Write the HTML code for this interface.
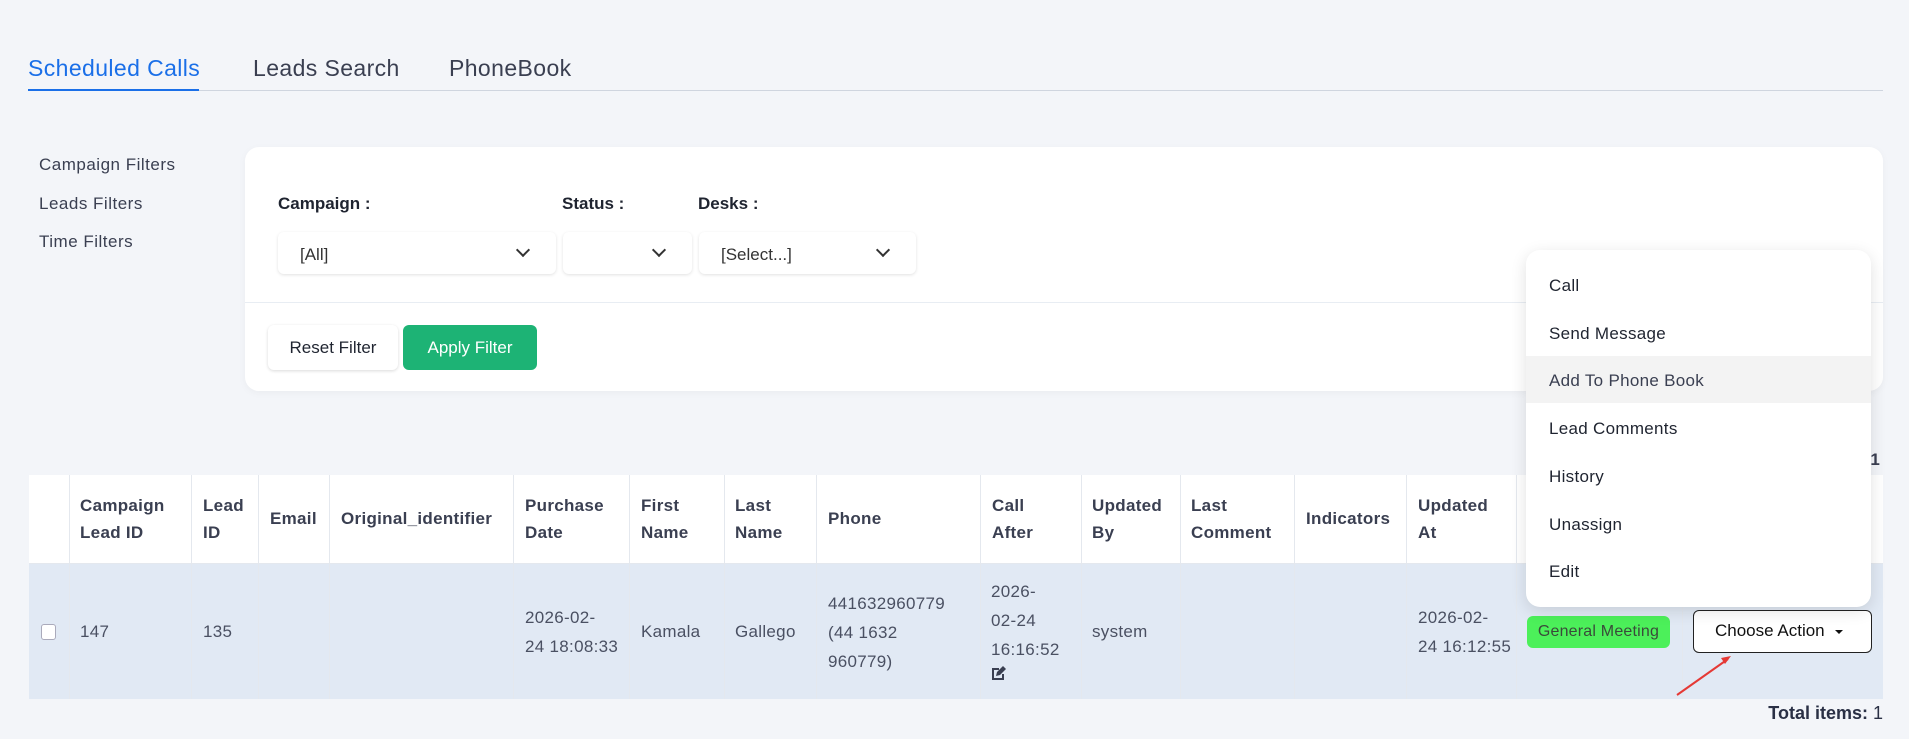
<!DOCTYPE html>
<html><head><meta charset="utf-8"><style>
*{box-sizing:border-box;margin:0;padding:0}
body{width:1909px;height:739px;background:#f3f5f9;font-family:"Liberation Sans",sans-serif;color:#3a3f51;position:relative;overflow:hidden}
.a{position:absolute;white-space:nowrap}
.tab{font-size:23px;top:55px;color:#3a3f51;letter-spacing:0.4px}
.side{font-size:17px;left:39px;color:#3a3f51;letter-spacing:0.5px}
.card{position:absolute;left:245px;top:147px;width:1638px;height:244px;background:#fff;border-radius:14px;box-shadow:0 2px 8px rgba(0,0,0,.04)}
.lbl{font-size:17px;font-weight:bold;top:194px;color:#1f2430}
.sel{position:absolute;top:232px;height:42px;background:#fff;border-radius:6px;box-shadow:0 1px 3px rgba(0,0,0,.12);font-size:17px;color:#333;padding:13px 0 0 22px}
.chev{position:absolute;right:28px;top:13px;width:10px;height:10px;border-right:2px solid #333;border-bottom:2px solid #333;transform:rotate(45deg)}
.btn{position:absolute;top:325px;height:45px;border-radius:6px;font-size:17px;text-align:center;line-height:45px}
.tbl{position:absolute;left:29px;top:475px;width:1854px;height:224px;background:#fff}
.row{position:absolute;left:0;top:89px;width:1854px;height:135px;background:#e1e9f4}
.vl{position:absolute;top:0;width:1px;height:224px;background:#e4e8ee}
.h{position:absolute;font-size:17px;font-weight:bold;line-height:27px;color:#3a3f51;white-space:nowrap;letter-spacing:0.3px}
.c{position:absolute;font-size:17px;line-height:29px;color:#4a5062;white-space:nowrap;letter-spacing:0.3px}
.menu{position:absolute;left:1526px;top:250px;width:345px;height:357px;background:#fff;border-radius:14px;box-shadow:0 4px 16px rgba(0,0,0,.12)}
.mi{position:absolute;left:23px;font-size:17px;color:#1f2430;letter-spacing:0.3px}
</style></head><body>
<div class="a tab" style="left:28px;color:#1a6fe8">Scheduled Calls</div>
<div class="a tab" style="left:253px">Leads Search</div>
<div class="a tab" style="left:449px">PhoneBook</div>
<div class="a" style="left:28px;top:90px;width:1855px;height:1px;background:#cfd5df"></div>
<div class="a" style="left:28px;top:89px;width:171px;height:2px;background:#1a6fe8"></div>

<div class="a side" style="top:155px">Campaign Filters</div>
<div class="a side" style="top:194px">Leads Filters</div>
<div class="a side" style="top:232px">Time Filters</div>

<div class="card"></div>
<div class="a lbl" style="left:278px">Campaign :</div>
<div class="a lbl" style="left:562px">Status :</div>
<div class="a lbl" style="left:698px">Desks :</div>
<div class="sel" style="left:278px;width:278px">[All]<span class="chev"></span></div>
<div class="sel" style="left:563px;width:129px"><span class="chev"></span></div>
<div class="sel" style="left:699px;width:217px">[Select...]<span class="chev"></span></div>
<div class="a" style="left:245px;top:302px;width:1638px;height:1px;background:#e8edf3"></div>
<div class="btn" style="left:268px;width:130px;background:#fff;box-shadow:0 1px 3px rgba(0,0,0,.15);color:#1f2430">Reset Filter</div>
<div class="btn" style="left:403px;width:134px;background:#1db375;color:#fff">Apply Filter</div>

<div class="a" style="left:1860px;top:450px;font-size:17px;font-weight:bold">: 1</div>

<div class="tbl">
<div class="row"></div>
<div class="vl" style="left:40px"></div><div class="vl" style="left:162px"></div><div class="vl" style="left:229px"></div><div class="vl" style="left:300px"></div><div class="vl" style="left:484px"></div><div class="vl" style="left:600px"></div><div class="vl" style="left:695px"></div><div class="vl" style="left:787px"></div><div class="vl" style="left:951px"></div><div class="vl" style="left:1052px"></div><div class="vl" style="left:1151px"></div><div class="vl" style="left:1265px"></div><div class="vl" style="left:1377px"></div><div class="vl" style="left:1487px"></div><div class="vl" style="left:1653px"></div>
<div class="a" style="left:0;top:88px;width:1854px;height:1px;background:#e4e8ee"></div>
<div class="h" style="left:51px;top:17px">Campaign<br>Lead ID</div>
<div class="h" style="left:174px;top:17px">Lead<br>ID</div>
<div class="h" style="left:241px;top:30px">Email</div>
<div class="h" style="left:312px;top:30px">Original_identifier</div>
<div class="h" style="left:496px;top:17px">Purchase<br>Date</div>
<div class="h" style="left:612px;top:17px">First<br>Name</div>
<div class="h" style="left:706px;top:17px">Last<br>Name</div>
<div class="h" style="left:799px;top:30px">Phone</div>
<div class="h" style="left:963px;top:17px">Call<br>After</div>
<div class="h" style="left:1063px;top:17px">Updated<br>By</div>
<div class="h" style="left:1162px;top:17px">Last<br>Comment</div>
<div class="h" style="left:1277px;top:30px">Indicators</div>
<div class="h" style="left:1389px;top:17px">Updated<br>At</div>
<div class="a" style="left:12px;top:149px;width:15px;height:16px;background:#fff;border:1px solid #aab;border-radius:3px"></div>
<div class="c" style="left:51px;top:142px">147</div>
<div class="c" style="left:174px;top:142px">135</div>
<div class="c" style="left:496px;top:128px">2026-02-<br>24 18:08:33</div>
<div class="c" style="left:612px;top:142px">Kamala</div>
<div class="c" style="left:706px;top:142px">Gallego</div>
<div class="c" style="left:799px;top:114px">441632960779<br>(44 1632<br>960779)</div>
<div class="c" style="left:962px;top:102px">2026-<br>02-24<br>16:16:52</div>
<svg class="a" style="left:962px;top:190px" width="17" height="16" viewBox="0 0 17 16"><path d="M1 3h7v2H3v8h8V9h2v6H1z" fill="#3a3f51"/><path d="M5 11l1-4 6-6 3 3-6 6z" fill="#3a3f51"/></svg>
<div class="c" style="left:1063px;top:142px">system</div>
<div class="c" style="left:1389px;top:128px">2026-02-<br>24 16:12:55</div>
</div>

<div class="a" style="left:1527px;top:616px;width:143px;height:32px;background:#4cf05a;border-radius:6px;font-size:16px;line-height:32px;text-align:center;color:#3a4a3a;letter-spacing:0.2px">General Meeting</div>
<div class="a" style="left:1693px;top:610px;width:179px;height:43px;background:#fff;border:1.5px solid #222;border-radius:6px;font-size:17px;line-height:40px;color:#111;padding-left:21px">Choose Action <span style="display:inline-block;margin-left:6px;border-left:4px solid transparent;border-right:4px solid transparent;border-top:4px solid #111;vertical-align:middle"></span></div>
<svg class="a" style="left:1670px;top:650px" width="70" height="50"><line x1="7" y1="45" x2="58" y2="9" stroke="#e53935" stroke-width="2"/><path d="M61 6l-10 2 4 6z" fill="#e53935"/></svg>

<div class="a" style="right:26px;top:703px;font-size:18px;font-weight:bold;color:#2a3045">Total items: <span style="font-weight:normal">1</span></div>

<div class="menu">
<div class="a" style="left:0;top:106px;width:345px;height:47px;background:#f3f3f3"></div>
<div class="mi" style="top:26px">Call</div>
<div class="mi" style="top:74px">Send Message</div>
<div class="mi" style="top:121px;color:#3a3f51">Add To Phone Book</div>
<div class="mi" style="top:169px">Lead Comments</div>
<div class="mi" style="top:217px">History</div>
<div class="mi" style="top:265px">Unassign</div>
<div class="mi" style="top:312px">Edit</div>
</div>
</body></html>
